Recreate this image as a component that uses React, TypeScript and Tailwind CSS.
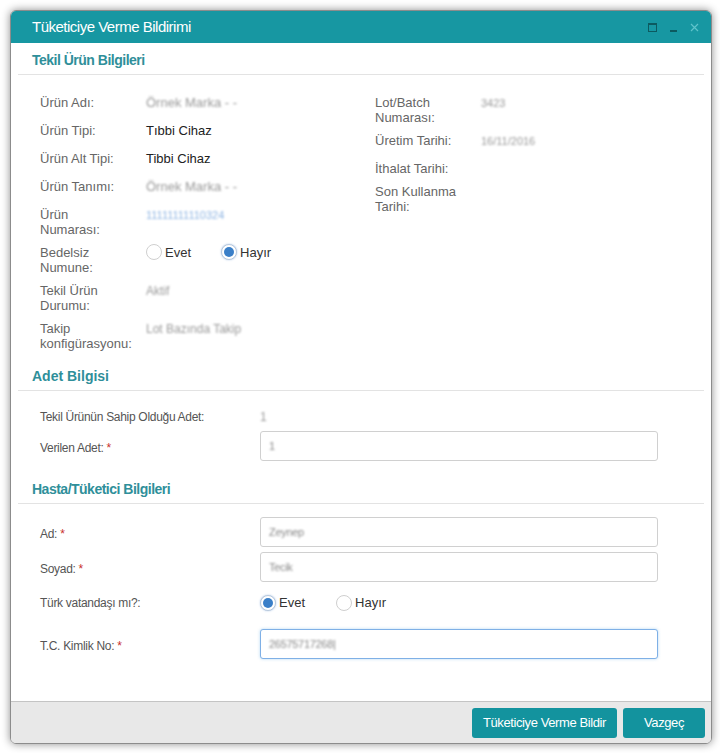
import React from "react";

const font = { fontFamily: '"Liberation Sans", Arial, sans-serif' };

function Blur({ children, className = "" }: { children: React.ReactNode; className?: string }) {
	return <span className={`inline-block blur-[1.2px] ${className}`}>{children}</span>;
}

function Radio({ checked, label }: { checked?: boolean; label: string }) {
	return (
		<label className="flex items-center gap-[3px] text-[13px] text-[#333]">
			<span
				className={
					checked
						? "w-[16px] h-[16px] rounded-full border border-[#b9c9dc] bg-white flex items-center justify-center shadow-[0_0_2px_rgba(60,120,200,0.4)]"
						: "w-[16px] h-[16px] rounded-full border border-[#cfcfcf] bg-white"
				}>
				{checked && <span className="w-[10px] h-[10px] rounded-full bg-[#3a7fc8]" />}
			</span>
			{label}
		</label>
	);
}

function InfoRow({
	label,
	children,
	short,
}: {
	label: string;
	children?: React.ReactNode;
	short?: boolean;
}) {
	return (
		<div className={`flex mb-[8px] ${short ? "" : "min-h-[20px]"}`}>
			<div className="w-[106px] pr-[22px] shrink-0 text-[13px] leading-[15px] text-[#666]">{label}</div>
			<div className="text-[13px] leading-[15px] text-[#222]">{children}</div>
		</div>
	);
}

function SectionTitle({ children, bold }: { children: React.ReactNode; bold?: boolean }) {
	return (
		<div className="h-[32px] flex items-center pt-[3px] pl-[14px] border-b border-[#e3e3e3]">
			<span
				className={
					bold
						? "text-[14px] font-bold text-[#2f8f9a]"
						: "text-[14px] font-bold text-[#2f8f9a] tracking-[-0.5px]"
				}>
				{children}
			</span>
		</div>
	);
}

function Req() {
	return <span className="text-[#c9302c] ml-[3px]">*</span>;
}

function Field({ value, focus }: { value: string; focus?: boolean }) {
	return (
		<div
			className={
				focus
					? "w-[398px] h-[30px] rounded-[3px] border border-[#7fb0e6] bg-white flex items-center pl-[8px] shadow-[0_0_3px_rgba(102,175,233,0.5)]"
					: "w-[398px] h-[30px] rounded-[3px] border border-[#d0d0d0] bg-white flex items-center pl-[8px]"
			}>
			<Blur className="text-[11px] text-[#888]">{value}</Blur>
		</div>
	);
}

export default function App() {
	return (
		<div style={font} className="w-[720px] h-[753px] bg-white pl-[10px] pr-[8px] pt-[10px] pb-[9px]">
			<div className="h-full flex flex-col rounded-[6px] border border-[#8c8c8c] overflow-hidden shadow-[0_0_9px_rgba(0,0,0,0.45)]">
				{/* Header */}
				<div className="h-[32px] shrink-0 bg-[#1797a2] flex items-center justify-between pl-[21px] pr-[12px]">
					<span className="text-white text-[15px] tracking-[-0.5px]">Tüketiciye Verme Bildirimi</span>
					<div className="flex items-center gap-[13px] pt-[1px]">
						<span className="w-[9px] h-[9px] border border-[#0c5a60] border-t-2" />
						<span className="w-[7px] h-[2px] bg-[#0c5a60] mt-[6px]" />
						<svg width="9" height="9" viewBox="0 0 9 9">
							<path d="M1 1L8 8M8 1L1 8" stroke="#5fc3cb" strokeWidth="1.2" />
						</svg>
					</div>
				</div>

				{/* Body */}
				<div className="flex-1 bg-white px-[7px]">
					<SectionTitle>Tekil Ürün Bilgileri</SectionTitle>
					<div className="flex pt-[20px] pl-[22px]">
						<div className="w-[335px]">
							<InfoRow label="Ürün Adı:">
								<Blur className="text-[#999]">Örnek Marka - -</Blur>
							</InfoRow>
							<InfoRow label="Ürün Tipi:">Tıbbi Cihaz</InfoRow>
							<InfoRow label="Ürün Alt Tipi:">Tibbi Cihaz</InfoRow>
							<InfoRow label="Ürün Tanımı:">
								<Blur className="text-[#999]">Örnek Marka - -</Blur>
							</InfoRow>
							<InfoRow label="Ürün Numarası:">
								<Blur className="text-[#8fb5e3] text-[11px]">11111111110324</Blur>
							</InfoRow>
							<InfoRow label="Bedelsiz Numune:">
								<div className="flex items-center gap-[30px] -mt-[1px]">
									<Radio label="Evet" />
									<Radio checked label="Hayır" />
								</div>
							</InfoRow>
							<InfoRow label="Tekil Ürün Durumu:">
								<Blur className="text-[#999] text-[12px]">Aktif</Blur>
							</InfoRow>
							<InfoRow label="Takip konfigürasyonu:">
								<Blur className="text-[#999] text-[12px]">Lot Bazında Takip</Blur>
							</InfoRow>
						</div>
						<div className="flex-1">
							<InfoRow label="Lot/Batch Numarası:">
								<Blur className="text-[#999] text-[11px]">3423</Blur>
							</InfoRow>
							<InfoRow label="Üretim Tarihi:">
								<Blur className="text-[#999] text-[11px]">16/11/2016</Blur>
							</InfoRow>
							<InfoRow short label="İthalat Tarihi:" />
							<InfoRow label="Son Kullanma Tarihi:" />
						</div>
					</div>

					<SectionTitle bold>Adet Bilgisi</SectionTitle>
					<div className="pl-[22px] pt-[16px] pb-[11px] text-[12px] text-[#555] tracking-[-0.3px]">
						<div className="flex items-center h-[20px]">
							<span className="w-[220px]">Tekil Ürünün Sahip Olduğu Adet:</span>
							<Blur className="text-[#999]">1</Blur>
						</div>
						<div className="flex items-center mt-[4px]">
							<span className="w-[220px] pt-[4px]">
								Verilen Adet:
								<Req />
							</span>
							<Field value="1" />
						</div>
					</div>

					<SectionTitle>Hasta/Tüketici Bilgileri</SectionTitle>
					<div className="pl-[22px] pt-[13px] text-[12px] text-[#555] tracking-[-0.3px]">
						<div className="flex items-center">
							<span className="w-[220px] pt-[4px]">
								Ad:
								<Req />
							</span>
							<Field value="Zeynep" />
						</div>
						<div className="flex items-center mt-[5px]">
							<span className="w-[220px] pt-[4px]">
								Soyad:
								<Req />
							</span>
							<Field value="Tecik" />
						</div>
						<div className="flex items-center h-[20px] mt-[11px]">
							<span className="w-[220px]">Türk vatandaşı mı?:</span>
							<div className="flex items-center gap-[31px] tracking-normal">
								<Radio checked label="Evet" />
								<Radio label="Hayır" />
							</div>
						</div>
						<div className="flex items-center mt-[16px]">
							<span className="w-[220px] pt-[4px]">
								T.C. Kimlik No:
								<Req />
							</span>
							<Field focus value="26575717268|" />
						</div>
					</div>
				</div>

				{/* Footer */}
				<div className="h-[42px] shrink-0 bg-[#e8e8e8] border-t border-[#c4c4c4] flex items-center justify-end gap-[6px] pr-[6px]">
					<button className="h-[30px] w-[145px] rounded-[3px] bg-[#13939e] text-white text-[13px] tracking-[-0.4px]">
						Tüketiciye Verme Bildir
					</button>
					<button className="h-[30px] w-[82px] rounded-[3px] bg-[#13939e] text-white text-[13px] tracking-[-0.4px]">
						Vazgeç
					</button>
				</div>
			</div>
		</div>
	);
}
